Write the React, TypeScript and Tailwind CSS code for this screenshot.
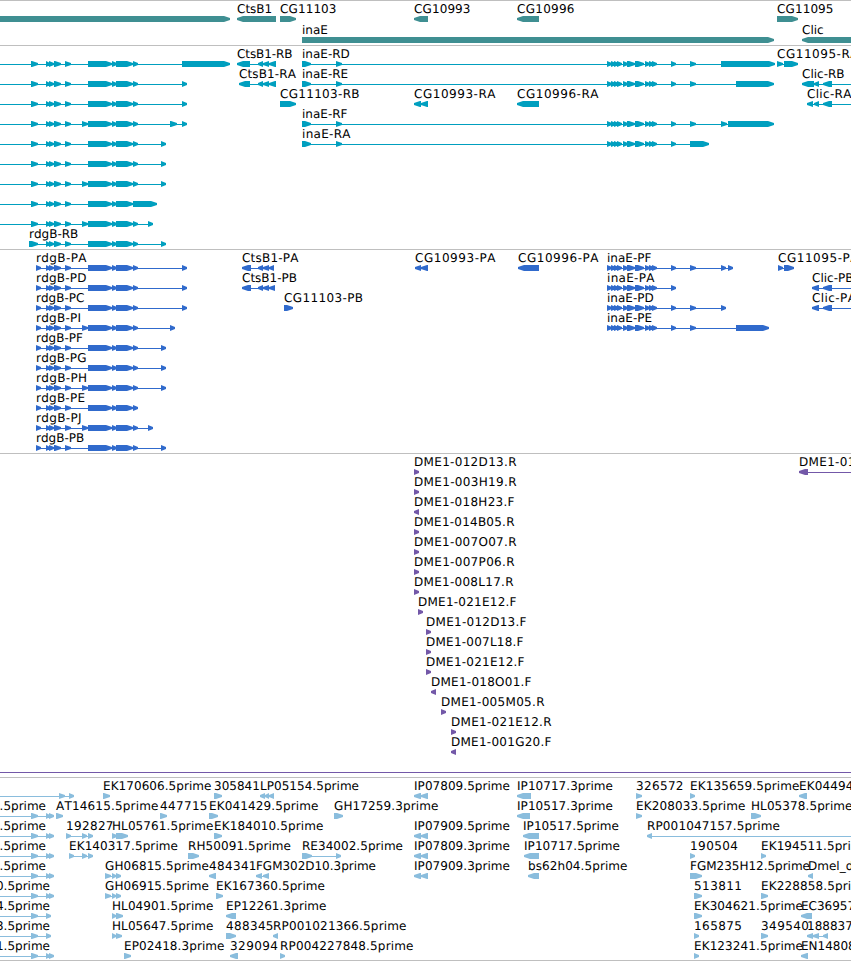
type Span = [number, number];

interface Feature {
  label?: string;
  /** right edge for labels that run in from the left of the view */
  endAt?: number;
  /** advance width of the label */
  width?: number;
  y: number;
  blocks: Span[];
  reverse?: boolean;
  from?: number;
  to?: number;
}

interface TrackData {
  name: string;
  height: string;
  color: string;
  features: Feature[];
}

const VIEW = 851;

const f = (label: string, y: number, blocks: Span[], extra: Partial<Feature> = {}): Feature => ({ label, y, blocks, ...extra });
const rev = (label: string, y: number, blocks: Span[], extra: Partial<Feature> = {}): Feature => ({ label, y, blocks, reverse: true, ...extra });

// Exons shared by all rdgB isoforms
const rdgHead: Span[] = [[46, 50], [49, 54], [54, 61], [65, 71]];
const rdgCore: Span[] = [[88, 112], [112, 117], [116, 133]];
const rdg = (first: Span, extra: boolean, tail: Span[]): Span[] => [
  first,
  ...rdgHead,
  ...(extra ? ([[82, 88]] as Span[]) : []),
  ...rdgCore,
  ...tail,
];
const mid: Span = [133, 138];

// Exons shared by all inaE isoforms
const ina: Span[] = [[607, 612], [611, 616], [614, 619], [617, 622], [623, 628], [627, 635], [635, 644], [645, 650], [649, 654], [652, 657], [671, 676]];

const genes: Feature[] = [
  { y: 19, blocks: [[-10, 230]] },
  rev("CtsB1", 19, [[237, 276]]),
  f("CG11103", 19, [[280, 296]], { width: 56.5 }),
  rev("CG10993", 19, [[414, 428]], { width: 56.5 }),
  rev("CG10996", 19, [[517, 539]], { width: 57.5 }),
  f("CG11095", 19, [[777, 798]], { width: 56.5 }),
  f("inaE", 40, [[302, 774]]),
  rev("Clic", 40, [[802, 870]]),
];

const transcripts: Feature[] = [
  { y: 19, from: 0, blocks: rdg([31, 38], false, [mid, [182, 230]]) },
  { y: 39, from: 0, blocks: rdg([31, 38], false, [mid, [182, 187]]) },
  { y: 59, from: 0, blocks: rdg([31, 38], false, [mid, [182, 187]]) },
  { y: 79, from: 0, blocks: rdg([31, 38], true, [mid, [170, 177], [182, 187]]) },
  { y: 99, from: 0, blocks: rdg([31, 38], false, [mid, [161, 166]]) },
  { y: 119, from: 0, blocks: rdg([31, 38], false, [mid, [161, 166]]) },
  { y: 139, from: 0, blocks: rdg([31, 38], true, [mid, [161, 166]]) },
  { y: 159, from: 0, blocks: rdg([31, 38], false, [[133, 157]]) },
  { y: 179, from: 0, blocks: rdg([31, 38], true, [mid, [148, 153]]) },
  f("rdgB-RB", 199, rdg([29, 38], false, [mid, [161, 166]])),
  rev("CtsB1-RB", 19, [[237, 250], [258, 263], [263, 269], [269, 276]], { width: 55.5 }),
  rev("CtsB1-RA", 39, [[239, 250], [258, 263], [263, 269], [269, 276]], { width: 57 }),
  f("CG11103-RB", 59, [[280, 296]], { width: 79.5 }),
  f("inaE-RD", 19, [[302, 311], [336, 342], ...ina, [690, 696], [721, 775]]),
  f("inaE-RE", 39, [[302, 311], [336, 342], ...ina, [690, 696], [736, 774]]),
  f("inaE-RF", 79, [[302, 311], [336, 342], ...ina, [690, 696], [721, 727], [728, 774]]),
  f("inaE-RA", 99, [[302, 311], [336, 342], ...ina, [690, 709]], { width: 48.5 }),
  rev("CG10993-RA", 59, [[414, 421], [421, 428]], { width: 81.5 }),
  rev("CG10996-RA", 59, [[517, 539]], { width: 81.5 }),
  f("CG11095-RA", 19, [[777, 783], [784, 798]], { width: 81.5 }),
  rev("Clic-RB", 39, [[802, 814], [814, 819], [823, 832]], { to: VIEW }),
  rev("Clic-RA", 59, [[807, 813], [814, 819], [823, 832]], { to: VIEW, width: 44.5 }),
];

const proteins: Feature[] = [
  f("rdgB-PA", 19, rdg([36, 41], false, [mid, [182, 187]]), { width: 50.5 }),
  f("rdgB-PD", 39, rdg([36, 41], false, [mid, [182, 187]]), { width: 50.5 }),
  f("rdgB-PC", 59, rdg([36, 41], false, [mid, [182, 187]])),
  f("rdgB-PI", 79, rdg([36, 41], true, [mid, [170, 175]]), { width: 45 }),
  f("rdgB-PF", 99, rdg([36, 41], false, [mid, [161, 166]])),
  f("rdgB-PG", 119, rdg([36, 41], false, [mid, [161, 166]]), { width: 50.5 }),
  f("rdgB-PH", 139, rdg([36, 41], true, [mid, [161, 166]]), { width: 51 }),
  f("rdgB-PE", 159, rdg([36, 41], false, [mid]), { width: 49 }),
  f("rdgB-PJ", 179, rdg([36, 41], true, [mid, [148, 153]]), { width: 45.5 }),
  f("rdgB-PB", 199, rdg([36, 41], false, [mid, [161, 166]])),
  rev("CtsB1-PA", 19, [[242, 251], [258, 263], [263, 269], [269, 274]], { width: 56.5 }),
  rev("CtsB1-PB", 39, [[242, 251], [258, 263], [263, 269], [269, 275]], { width: 55 }),
  f("CG11103-PB", 59, [[284, 293]], { width: 79 }),
  rev("CG10993-PA", 19, [[415, 421], [421, 428]], { width: 80.5 }),
  rev("CG10996-PA", 19, [[518, 539]], { width: 80.5 }),
  f("inaE-PF", 19, [...ina, [690, 696], [721, 726], [728, 733]]),
  f("inaE-PA", 39, ina, { width: 47.5 }),
  f("inaE-PD", 59, [...ina, [690, 696], [721, 726]]),
  f("inaE-PE", 79, [...ina, [690, 696], [736, 769]]),
  f("CG11095-PA", 19, [[778, 783], [784, 794]], { width: 80.5 }),
  rev("Clic-PB", 39, [[812, 819], [814, 819], [823, 832]], { to: VIEW }),
  rev("Clic-PA", 59, [[812, 819], [814, 819], [823, 832]], { to: VIEW, width: 44 }),
];

const bacEnds: Feature[] = [
  f("DME1-012D13.R", 19, [[414, 419]], { width: 102.5 }),
  f("DME1-003H19.R", 39, [[414, 419]], { width: 102.5 }),
  rev("DME1-018H23.F", 59, [[414, 419]], { width: 100.5 }),
  f("DME1-014B05.R", 79, [[414, 419]], { width: 100.5 }),
  f("DME1-007O07.R", 99, [[414, 419]], { width: 102.5 }),
  f("DME1-007P06.R", 119, [[414, 419]], { width: 100.5 }),
  f("DME1-008L17.R", 139, [[414, 419]], { width: 99.5 }),
  f("DME1-021E12.F", 159, [[418, 423]], { width: 98.5 }),
  f("DME1-012D13.F", 179, [[426, 431]], { width: 100.5 }),
  f("DME1-007L18.F", 199, [[426, 431]], { width: 97.5 }),
  f("DME1-021E12.F", 219, [[426, 431]], { width: 98.5 }),
  rev("DME1-018O01.F", 239, [[431, 436]], { width: 100.5 }),
  f("DME1-005M05.R", 259, [[441, 446]], { width: 103.5 }),
  f("DME1-021E12.R", 279, [[451, 456]], { width: 100.5 }),
  rev("DME1-001G20.F", 299, [[451, 456]], { width: 100.5 }),
  rev("DME1-012D13.R", 19, [[799, 808]], { to: VIEW, width: 102.5 }),
  { y: 319, from: 0, to: VIEW, blocks: [] },
];

const estLeft: Span[] = [[31, 38], [46, 50], [49, 54]];
const estShort: Span[] = [[31, 38], [46, 51]];

const ests: Feature[] = [
  { y: 19, from: 0, blocks: [[59, 65], [69, 74]] },
  f("EK170606.5prime", 19, [[103, 110]], { width: 108.5 }),
  f("305841", 19, [[214, 222]]),
  rev("LP05154.5prime", 19, [[260, 265], [265, 269], [269, 274]], { width: 99 }),
  rev("IP07809.5prime", 19, [[414, 421], [421, 428]], { width: 96 }),
  rev("IP10717.3prime", 19, [[517, 531]], { width: 96 }),
  f("326572", 19, [[636, 642]], { width: 47.5 }),
  f("EK135659.5prime", 19, [[690, 695]], { width: 109.5 }),
  rev("EK044945.5prime", 19, [[799, 807]], { width: 109.5 }),

  f("0.5prime", 39, estLeft, { from: 0, endAt: 46 }),
  f("AT14615.5prime", 39, [[56, 63]], { width: 102.5 }),
  f("447715", 39, [[160, 167]], { width: 47.5 }),
  f("EK041429.5prime", 39, [[209, 218]], { width: 109.5 }),
  f("GH17259.3prime", 39, [[334, 343]], { width: 104.5 }),
  rev("IP10517.3prime", 39, [[517, 530]], { width: 96 }),
  f("EK208033.5prime", 39, [[636, 642]], { width: 109.5 }),
  f("HL05378.5prime", 39, [[751, 761]], { width: 101.5 }),

  f("0.5prime", 59, estLeft, { from: 0, endAt: 46 }),
  f("192827", 59, [[66, 71], [82, 87], [88, 93]], { width: 47.5 }),
  f("HL05761.5prime", 59, [[112, 117], [116, 128]], { width: 101.5 }),
  f("EK184010.5prime", 59, [[214, 222]], { width: 109.5 }),
  rev("IP07909.5prime", 59, [[414, 421], [421, 428]], { width: 96 }),
  rev("IP10517.5prime", 59, [[523, 539]], { width: 96 }),
  rev("RP001047157.5prime", 59, [[647, 652]], { to: VIEW, width: 133 }),

  f("0.5prime", 79, estLeft, { from: 0, endAt: 46 }),
  f("EK140317.5prime", 79, [[69, 74], [82, 87], [88, 93]], { width: 109 }),
  f("RH50091.5prime", 79, [[188, 199]], { width: 103 }),
  f("RE34002.5prime", 79, [[302, 312], [336, 341]], { width: 101 }),
  rev("IP07809.3prime", 79, [[414, 421], [421, 428]], { width: 96 }),
  rev("IP10717.5prime", 79, [[524, 539]], { width: 96 }),
  f("190504", 79, [[690, 695]], { width: 48 }),
  f("EK194511.5prime", 79, [[761, 766]], { width: 109 }),

  f("0.5prime", 99, estLeft, { from: 0, endAt: 46 }),
  f("GH06815.5prime", 99, [[105, 111], [112, 116], [116, 121]], { width: 104 }),
  rev("484341", 99, [[209, 216]], { width: 47.5 }),
  rev("FGM302D10.3prime", 99, [[256, 262], [263, 269]], { width: 120 }),
  rev("IP07909.3prime", 99, [[414, 421], [421, 428]], { width: 96 }),
  rev("bs62h04.5prime", 99, [[528, 539]], { width: 99.5 }),
  f("FGM235H12.5prime", 99, [[690, 702]], { width: 120 }),
  rev("Dmel_dsx", 99, [[808, 813]]),

  f("0.5prime", 119, estLeft, { from: 0, endAt: 50 }),
  f("GH06915.5prime", 119, [[105, 111], [112, 116], [116, 121]], { width: 104 }),
  f("EK167360.5prime", 119, [[216, 223]], { width: 109 }),
  f("513811", 119, [[694, 702]], { width: 48 }),
  f("EK228858.5prime", 119, [[761, 768]], { width: 109.5 }),

  f("4.5prime", 139, estShort, { from: 0, endAt: 50 }),
  f("HL04901.5prime", 139, [[112, 116], [116, 123]], { width: 101.5 }),
  rev("EP12261.3prime", 139, [[226, 236]], { width: 100.5 }),
  f("EK304621.5prime", 139, [[694, 702]], { width: 109 }),
  rev("EC369577", 139, [[801, 812]]),

  f("3.5prime", 159, estShort, { from: 0, endAt: 50 }),
  f("HL05647.5prime", 159, [[112, 116], [116, 122]], { width: 101.5 }),
  f("488345", 159, [[226, 236]], { width: 47.5 }),
  rev("RP001021366.5prime", 159, [[273, 278]], { width: 133.5 }),
  f("165875", 159, [[694, 699]], { width: 48 }),
  f("349540", 159, [[761, 768]], { width: 48 }),
  rev("188837", 159, [[807, 813], [813, 819], [823, 828]]),

  f("1.5prime", 179, estLeft, { from: 0, endAt: 50 }),
  f("EP02418.3prime", 179, [[124, 131]], { width: 100.5 }),
  rev("329094", 179, [[230, 238]], { width: 48 }),
  f("RP004227848.5prime", 179, [[280, 285]], { width: 133.5 }),
  f("EK123241.5prime", 179, [[694, 699]], { width: 109 }),
  rev("EN148085", 179, [[801, 808]]),
];

const tracks: TrackData[] = [
  { name: "Genes", height: "h-[45px]", color: "text-[#3f8f92]", features: genes },
  { name: "Transcripts", height: "h-[204px]", color: "text-[#009fbf]", features: transcripts },
  { name: "Proteins", height: "h-[204px]", color: "text-[#306acc]", features: proteins },
  { name: "BAC ends", height: "h-[324px]", color: "text-[#7358a8]", features: bacEnds },
  { name: "ESTs", height: "h-[184px] border-b", color: "text-[#8abddd]", features: ests },
];

function arrow([a, b]: Span, y: number, reverse?: boolean) {
  const head = Math.min(6, b - a);
  return reverse
    ? `M${b} ${y - 3}H${a + head}L${a} ${y - 1}V${y + 1}L${a + head} ${y + 3}H${b}Z`
    : `M${a} ${y - 3}H${b - head}L${b} ${y - 1}V${y + 1}L${b - head} ${y + 3}H${a}Z`;
}

function Glyph({ feature }: { feature: Feature }) {
  const { blocks, y, reverse, label, width, endAt } = feature;
  const from = feature.from ?? blocks[0][0] + (reverse ? 2 : 0);
  const to = feature.to ?? blocks[blocks.length - 1][1] - 2;
  const joined = blocks.length !== 1 || feature.from !== undefined || feature.to !== undefined;
  return (
    <g>
      {joined && <rect x={from} y={y} width={to - from} height={1} fill="currentColor" />}
      <path d={blocks.map((b) => arrow(b, y, reverse)).join("")} fill="currentColor" />
      {label && (
        <text
          x={endAt ?? blocks[0][0]}
          y={y - 6}
          textAnchor={endAt ? "end" : "start"}
          textLength={width}
          className="fill-black"
        >
          {label}
        </text>
      )}
    </g>
  );
}

function Track({ track }: { track: TrackData }) {
  return (
    <section aria-label={track.name} className={`w-full shrink-0 overflow-hidden border-t border-[#bfbfbf] ${track.height} ${track.color}`}>
      <svg
        width={VIEW}
        height="100%"
        className="-mt-px block overflow-visible text-[12px] [font-kerning:none] [text-rendering:geometricPrecision]"
      >
        {track.features.map((feature, i) => (
          <Glyph key={i} feature={feature} />
        ))}
      </svg>
    </section>
  );
}

export default function App() {
  return (
    <main className="flex h-[961px] w-[851px] flex-col overflow-hidden bg-white font-['DejaVu_Sans',sans-serif]">
      {tracks.map((track) => (
        <Track key={track.name} track={track} />
      ))}
    </main>
  );
}
